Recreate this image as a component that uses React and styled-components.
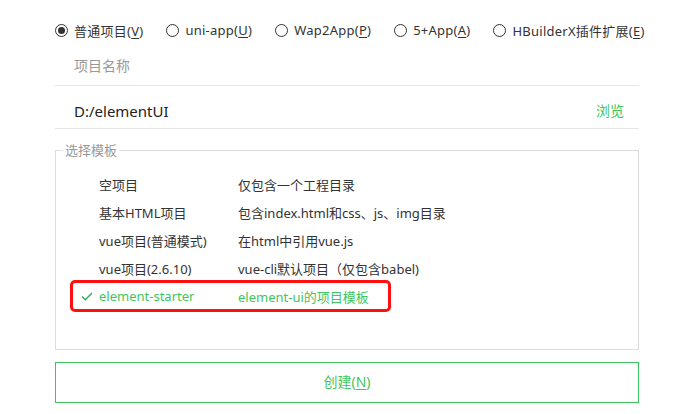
import React from "react";
import styled, { createGlobalStyle } from "styled-components";

const GlobalStyle = createGlobalStyle`
  body {
    margin: 0;
    background: #fff;
    font-family: "Noto Sans", "Noto Sans CJK SC", sans-serif;
    color: #333;
  }
`;

const GREEN = "#3fc55e";

const radios = [
  { label: "普通项目", key: "V", checked: true },
  { label: "uni-app", key: "U" },
  { label: "Wap2App", key: "P" },
  { label: "5+App", key: "A" },
  { label: "HBuilderX插件扩展", key: "E" },
];

const templates = [
  { name: "空项目", desc: "仅包含一个工程目录" },
  { name: "基本HTML项目", desc: "包含index.html和css、js、img目录" },
  { name: "vue项目(普通模式)", desc: "在html中引用vue.js" },
  { name: "vue项目(2.6.10)", desc: "vue-cli默认项目（仅包含babel)" },
  { name: "element-starter", desc: "element-ui的项目模板", selected: true },
];

export default function App() {
  return (
    <>
      <GlobalStyle />
      <Page>
        <RadioBar>
          {radios.map((r) => (
            <RadioItem key={r.key}>
              <RadioCircle $checked={r.checked} />
              <span>
                {r.label}(<u>{r.key}</u>)
              </span>
            </RadioItem>
          ))}
        </RadioBar>

        <Field $top={11} $height={40} $gap={6}>
          <Placeholder>项目名称</Placeholder>
        </Field>
        <Field $top={16} $height={43}>
          <PathText>D:/elementUI</PathText>
          <BrowseLink>浏览</BrowseLink>
        </Field>

        <TemplateBox>
          <Legend>选择模板</Legend>
          <TemplateList>
            {templates.map((t) => (
              <TemplateRow key={t.name} $selected={t.selected}>
                <CheckCell>
                  {t.selected && (
                    <svg width="12" height="9" viewBox="0 0 12 9">
                      <polyline
                        points="1,4.5 4.3,7.8 11,1"
                        fill="none"
                        stroke="#36a85a"
                        strokeWidth="1.4"
                      />
                    </svg>
                  )}
                </CheckCell>
                <span>{t.name}</span>
                <span>{t.desc}</span>
              </TemplateRow>
            ))}
          </TemplateList>
        </TemplateBox>

        <CreateButton>
          创建(<u>N</u>)
        </CreateButton>
      </Page>
    </>
  );
}

const Page = styled.div`
  width: 584px;
  padding-left: 55px;
`;

const RadioBar = styled.div`
  display: flex;
  align-items: center;
  gap: 23px;
  height: 20px;
  padding-top: 20px;
  font-size: 13px;
  letter-spacing: 0.25px;
  color: #333;
  u {
    text-decoration-thickness: 1px;
    text-underline-offset: 2px;
  }
`;

const RadioItem = styled.label`
  display: flex;
  align-items: center;
  gap: 6px;
  white-space: nowrap;
`;

const RadioCircle = styled.span`
  position: relative;
  width: 11px;
  height: 11px;
  border: 1px solid #333;
  border-radius: 50%;
  flex: none;
  &::after {
    content: "";
    display: ${(p) => (p.$checked ? "block" : "none")};
    position: absolute;
    inset: 2px;
    border-radius: 50%;
    background: #333;
  }
`;

const Field = styled.div`
  display: flex;
  align-items: flex-start;
  justify-content: space-between;
  box-sizing: border-box;
  height: ${(p) => p.$height}px;
  padding: ${(p) => p.$top}px 15px 0 19px;
  margin-top: ${(p) => p.$gap || 0}px;
  border-bottom: 1px solid #e5e5e5;
`;

const Placeholder = styled.span`
  font-size: 14px;
  line-height: 18px;
  color: #999;
`;

const PathText = styled.span`
  font-size: 15px;
  line-height: 18px;
  color: #222;
`;

const BrowseLink = styled.span`
  font-size: 14px;
  line-height: 18px;
  color: ${GREEN};
`;

const TemplateBox = styled.fieldset`
  margin: 12px 0 0;
  padding: 0 0 39px 0;
  border: 1px solid #ddd;
  min-width: 0;
`;

const Legend = styled.legend`
  margin-left: 7px;
  padding: 0 2px;
  font-size: 13px;
  line-height: 18px;
  color: #999;
`;

const TemplateList = styled.div`
  display: flex;
  flex-direction: column;
  padding: 11px 0 0 16px;
`;

const TemplateRow = styled.div`
  display: grid;
  grid-template-columns: 27px 139px auto;
  align-items: center;
  width: 317px;
  height: 28px;
  font-size: 13px;
  color: ${(p) => (p.$selected ? GREEN : "#333")};
  border-radius: 3px;
  outline: ${(p) => (p.$selected ? "3px solid #ff1010" : "none")};
  outline-offset: ${(p) => (p.$selected ? "-1px" : "0")};
  white-space: nowrap;
`;

const CheckCell = styled.span`
  display: flex;
  justify-content: center;
  padding-left: 2px;
`;

const CreateButton = styled.button`
  display: block;
  width: 100%;
  height: 41px;
  margin-top: 12px;
  padding: 0 0 3px;
  border: 1px solid ${GREEN};
  background: #fff;
  color: ${GREEN};
  font-family: inherit;
  font-size: 14px;
  u {
    text-underline-offset: 2px;
  }
`;
